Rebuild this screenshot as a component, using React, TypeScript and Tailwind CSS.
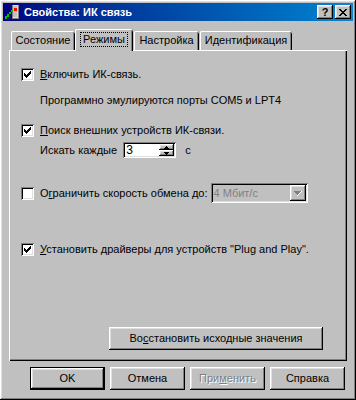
const raised =
  'shadow-[inset_-1px_-1px_#000,inset_1px_1px_#fff,inset_-2px_-2px_#808080,inset_2px_2px_#dfdfdf]';
const sunken =
  'shadow-[inset_1px_1px_#808080,inset_-1px_-1px_#fff,inset_2px_2px_#000,inset_-2px_-2px_#dfdfdf]';

const CHECK = [
  [6, 0], [5, 1], [6, 1], [0, 2], [4, 2], [5, 2], [6, 2],
  [0, 3], [1, 3], [3, 3], [4, 3], [5, 3],
  [0, 4], [1, 4], [2, 4], [3, 4], [4, 4],
  [1, 5], [2, 5], [3, 5], [2, 6],
];

function CheckBox({ checked }: { checked: boolean }) {
  return (
    <div className={`w-[13px] h-[13px] bg-white shrink-0 flex items-center justify-center ${sunken}`}>
      {checked && (
        <svg width="7" height="7" viewBox="0 0 7 7" shapeRendering="crispEdges">
          {CHECK.map(([x, y]) => (
            <rect key={`${x}-${y}`} x={x} y={y} width="1" height="1" fill="#000" />
          ))}
        </svg>
      )}
    </div>
  );
}

function Arrow({ up, color = '#000' }: { up?: boolean; color?: string }) {
  return (
    <svg width="5" height="3" viewBox="0 0 5 3" shapeRendering="crispEdges">
      {up ? (
        <>
          <rect x="2" y="0" width="1" height="1" fill={color} />
          <rect x="1" y="1" width="3" height="1" fill={color} />
          <rect x="0" y="2" width="5" height="1" fill={color} />
        </>
      ) : (
        <>
          <rect x="0" y="0" width="5" height="1" fill={color} />
          <rect x="1" y="1" width="3" height="1" fill={color} />
          <rect x="2" y="2" width="1" height="1" fill={color} />
        </>
      )}
    </svg>
  );
}

function TitleIcon() {
  return (
    <svg width="16" height="16" viewBox="0 0 16 16" shapeRendering="crispEdges">
      <rect x="7" y="1" width="7" height="14" fill="#808080" />
      <rect x="8" y="1" width="5" height="13" fill="#dfdfdf" />
      <rect x="8" y="2" width="4" height="11" fill="#c0c0c0" />
      <rect x="9" y="4" width="3" height="3" fill="#ff0000" />
      <rect x="6" y="6" width="2" height="2" fill="#00c000" />
      <rect x="4" y="8" width="2" height="2" fill="#00c000" />
      <rect x="2" y="10" width="2" height="3" fill="#00c000" />
      <rect x="0" y="12" width="2" height="3" fill="#00c000" />
    </svg>
  );
}

function Btn({ children, def, w = 'w-[75px]' }: { children: React.ReactNode; def?: boolean; w?: string }) {
  const sh = def
    ? 'shadow-[inset_0_0_0_1px_#000,inset_-2px_-2px_#000,inset_2px_2px_#fff,inset_-3px_-3px_#808080,inset_3px_3px_#dfdfdf]'
    : raised;
  return (
    <div className={`${w} h-[23px] flex items-center justify-center bg-[#c0c0c0] ${sh}`}>{children}</div>
  );
}

export default function App() {
  return (
    <div
      className={`w-[356px] h-[400px] bg-[#c0c0c0] p-[3px] flex flex-col text-[11px] text-black ${raised}`}
      style={{ fontFamily: '"Liberation Sans", Arial, sans-serif' }}
    >
      {/* title bar */}
      <div className="h-[18px] flex items-center bg-gradient-to-r from-[#000080] to-[#1084d0] pl-[2px] pr-[2px]">
        <TitleIcon />
        <span className="ml-[3px] text-white font-bold text-[11px] leading-none">Свойства: ИК связь</span>
        <div className="ml-auto flex gap-[2px]">
          <div className={`w-[16px] h-[14px] bg-[#c0c0c0] flex items-center justify-center font-bold text-[11px] leading-none ${raised}`}>?</div>
          <div className={`w-[16px] h-[14px] bg-[#c0c0c0] flex items-center justify-center ${raised}`}>
            <svg width="8" height="7" viewBox="0 0 8 7" shapeRendering="crispEdges">
              <path d="M0 0h2v1h-2zM6 0h2v1h-2zM1 1h2v1h-2zM5 1h2v1h-2zM2 2h4v1h-4zM3 3h2v1h-2zM2 4h4v1h-4zM1 5h2v1h-2zM5 5h2v1h-2zM0 6h2v1h-2zM6 6h2v1h-2z" fill="#000" />
            </svg>
          </div>
        </div>
      </div>

      {/* tabs + panel */}
      <div className="px-[6px] mt-[8px]">
        <div className="h-[21px] flex items-end">
          <div className="ml-[2px] w-[64px] h-[19px] flex items-center justify-center rounded-t-[2px] shadow-[inset_1px_0_#fff,inset_0_1px_#fff,inset_-1px_0_#000,inset_-2px_0_#808080]">
            Состояние
          </div>
          <div className="relative z-10 -mb-px w-[58px] h-[22px] bg-[#c0c0c0] flex items-start justify-center pt-[3px] rounded-t-[2px] shadow-[inset_1px_0_#fff,inset_0_1px_#fff,inset_-1px_0_#000,inset_-2px_0_#808080]">
            <span className="border border-dotted border-black px-[2px] leading-[13px]">Режимы</span>
          </div>
          <div className="ml-[1px] w-[65px] h-[19px] flex items-center justify-center rounded-t-[2px] shadow-[inset_1px_0_#fff,inset_0_1px_#fff,inset_-1px_0_#000,inset_-2px_0_#808080]">
            Настройка
          </div>
          <div className="ml-[1px] w-[92px] h-[19px] flex items-center justify-center rounded-t-[2px] shadow-[inset_1px_0_#fff,inset_0_1px_#fff,inset_-1px_0_#000,inset_-2px_0_#808080]">
            Идентификация
          </div>
        </div>

        <div className="h-[311px] flex flex-col pl-[12px] pt-[18px] shadow-[inset_1px_1px_#fff,inset_-1px_-1px_#000,inset_-2px_-2px_#808080]">
          <div className="h-[13px] flex items-center gap-[6px]">
            <CheckBox checked />
            <span><u>В</u>ключить ИК-связь.</span>
          </div>
          <div className="mt-[13px] h-[13px] flex items-center ml-[19px]">
            Программно эмулируются порты COM5 и LPT4
          </div>
          <div className="mt-[17px] h-[13px] flex items-center gap-[6px]">
            <CheckBox checked />
            <span><u>П</u>оиск внешних устройств ИК-связи.</span>
          </div>
          <div className="mt-[5px] h-[16px] flex items-center ml-[19px]">
            <span>Искать каждые</span>
            <div className={`ml-[6px] w-[53px] h-[16px] bg-white flex items-center pl-[3px] pr-[2px] ${sunken}`}>
              <span className="text-[12px]">3</span>
              <div className="ml-auto flex flex-col">
                <div className={`w-[15px] h-[6px] bg-[#c0c0c0] flex items-center justify-center ${raised}`}>
                  <Arrow up />
                </div>
                <div className={`w-[15px] h-[6px] bg-[#c0c0c0] flex items-center justify-center ${raised}`}>
                  <Arrow />
                </div>
              </div>
            </div>
            <span className="ml-[9px]">с</span>
          </div>
          <div className="mt-[25px] h-[20px] flex items-center">
            <CheckBox checked={false} />
            <span className="ml-[6px]">О<u>г</u>раничить скорость обмена до:</span>
            <div className={`ml-[3px] w-[97px] h-[20px] bg-[#c0c0c0] flex items-center pl-[3px] pr-[2px] ${sunken}`}>
              <span className="text-[#808080]">4 Мбит/с</span>
              <div className={`ml-auto w-[16px] h-[16px] bg-[#c0c0c0] flex items-center justify-center ${raised}`}>
                <svg width="8" height="5" viewBox="0 0 8 5" shapeRendering="crispEdges">
                  <path d="M0 0h7v1h-7zM1 1h5v1h-5zM2 2h3v1h-3zM3 3h1v1h-1z" fill="#808080" />
                  <path d="M7 0h1v1h-1zM6 1h1v1h-1zM5 2h1v1h-1zM4 3h1v1h-1zM3 4h1v1h-1z" fill="#fff" />
                </svg>
              </div>
            </div>
          </div>
          <div className="mt-[40px] h-[13px] flex items-center gap-[6px]">
            <CheckBox checked />
            <span><u>У</u>становить драйверы для устройств "Plug and Play".</span>
          </div>
          <div className="mt-[71px] self-end mr-[24px]">
            <Btn w="w-[214px]">
              <span>Во<u>с</u>становить исходные значения</span>
            </Btn>
          </div>
        </div>
      </div>

      {/* dialog buttons */}
      <div className="mt-[6px] flex justify-end gap-[5px] pr-[8px]">
        <Btn def>OK</Btn>
        <Btn>Отмена</Btn>
        <Btn>
          <span className="text-[#808080] [text-shadow:1px_1px_0_#fff]">При<u>м</u>енить</span>
        </Btn>
        <Btn>Справка</Btn>
      </div>
    </div>
  );
}
